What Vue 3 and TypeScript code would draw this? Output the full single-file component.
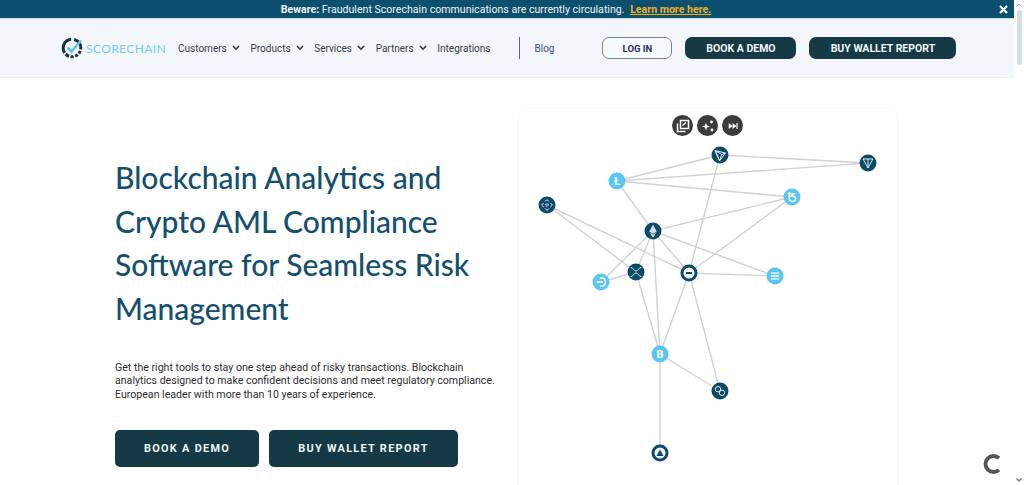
<script setup lang="ts">
interface GraphNode {
  id: string;
  x: number;
  y: number;
  light: boolean;
  icon?: string;
  fill?: string;
  label?: string;
}

const menu = ["Customers", "Products", "Services", "Partners"];

const nodes: GraphNode[] = [
  { id: "tron", x: 720, y: 155, light: false, icon: "M-5.5 -5L6 -2.2L-0.5 6.5ZM-5.5 -5L-0.5 6.5M-5.5 -5L2 -0.5L6 -2.2M2 -0.5L-0.5 6.5" },
  { id: "ton", x: 868, y: 163, light: false, icon: "M-5.5 -4.5H5.5L0 5.5ZM0 -4.5V5.5" },
  { id: "ltc", x: 617, y: 181, light: true, label: "Ł" },
  { id: "tezos", x: 792, y: 197, light: true, icon: "M-3 -5.5V1.5C-3 4 -1 5 1 5C3 5 4 3.5 4 2C4 0 2.5 -1 0 -1H-1L2.5 -3.8H-5" },
  { id: "bnb", x: 547, y: 205, light: false, icon: "M0 -6L2.2 -3.8M0 -6L-2.2 -3.8M6 0L3.8 -2.2M6 0L3.8 2.2M0 6L2.2 3.8M0 6L-2.2 3.8M-6 0L-3.8 -2.2M-6 0L-3.8 2.2M0 -1.7L1.7 0L0 1.7L-1.7 0Z" },
  { id: "eth", x: 653, y: 231, light: false, icon: "M0 -7L4.2 0.5L0 3L-4.2 0.5ZM0 4L3.8 1.8L0 7.5L-3.8 1.8Z", fill: "#d5dde2" },
  { id: "xrp", x: 636, y: 272, light: false, icon: "M-6 -5C-3 -5 -2 -1 0 -1C2 -1 3 -5 6 -5M-6 5C-3 5 -2 1 0 1C2 1 3 5 6 5" },
  { id: "dash", x: 689, y: 273, light: false },
  { id: "dgb", x: 601, y: 282, light: true, icon: "M-1.5 -4.5H1C3.5 -4.5 5 -2.5 5 0C5 2.5 3.5 4.5 1 4.5H-1.5M-5 0H2" },
  { id: "stripe", x: 775, y: 276, light: true, icon: "M-4.5 -3.2H4.5M-4.5 0H4.5M-4.5 3.2H4.5" },
  { id: "btc", x: 660, y: 354, light: true, label: "B" },
  { id: "poly", x: 720, y: 391, light: false, icon: "M-2.2 -5A3 3 0 1 0 -2.2 1A3 3 0 1 0 -2.2 -5ZM2.2 -1A3 3 0 1 0 2.2 5A3 3 0 1 0 2.2 -1Z" },
  { id: "avax", x: 660, y: 453, light: false },
];

const edges: [string, string][] = [
  ["tron", "ton"], ["tron", "ltc"], ["ltc", "ton"], ["ltc", "tezos"], ["ltc", "eth"],
  ["bnb", "xrp"], ["bnb", "dash"], ["eth", "tezos"], ["eth", "stripe"], ["eth", "dash"],
  ["eth", "xrp"], ["eth", "dgb"], ["eth", "btc"], ["tron", "dash"], ["tezos", "dash"],
  ["dash", "stripe"], ["dash", "btc"], ["dash", "poly"], ["xrp", "btc"], ["xrp", "dgb"],
  ["btc", "poly"], ["btc", "avax"],
];

function at(id: string): GraphNode {
  return nodes.find((n) => n.id === id)!;
}
</script>

<template>
  <div class="page">
    <div class="main">
      <div class="banner">
        <span class="banner-text"><b>Beware:</b> Fraudulent Scorechain communications are currently circulating.
          <a class="banner-link">Learn more here.</a></span>
        <svg class="banner-close" width="9" height="9" viewBox="0 0 9 9">
          <path d="M1 1L8 8M8 1L1 8" stroke="#fff" stroke-width="2.2" />
        </svg>
      </div>

      <header class="nav">
        <div class="logo">
          <svg width="22" height="22" viewBox="0 0 22 22">
            <circle cx="11" cy="11" r="8.8" fill="none" stroke="#16323f" stroke-width="3" stroke-dasharray="12 1.6 3 1.6 3 1.6 3 1.6 4 1.6 18 3" transform="rotate(-70 11 11)" />
            <path d="M6.5 10.5L10.5 14.5L20 3.5" fill="none" stroke="#5cc5f2" stroke-width="2.6" />
          </svg>
          <span class="logo-name">SCORECHAIN</span>
        </div>
        <nav class="links">
          <a v-for="item in menu" :key="item" class="link">
            {{ item }}
            <svg width="8" height="6" viewBox="0 0 8 6"><path d="M1 1L4 4.2L7 1" fill="none" stroke="#2b3a45" stroke-width="1.6" /></svg>
          </a>
          <a class="link">Integrations</a>
        </nav>
        <span class="divider"></span>
        <a class="link blog">Blog</a>
        <button class="btn-login">LOG IN</button>
        <button class="btn-dark demo">BOOK A DEMO</button>
        <button class="btn-dark report">BUY WALLET REPORT</button>
      </header>

      <section class="hero">
        <div class="copy">
          <h1>Blockchain Analytics and Crypto AML Compliance Software for Seamless Risk Management</h1>
          <p>Get the right tools to stay one step ahead of risky transactions. Blockchain analytics designed to make confident decisions and meet regulatory compliance. European leader with more than 10 years of experience.</p>
          <div class="cta">
            <button class="btn-cta">BOOK A DEMO</button>
            <button class="btn-cta">BUY WALLET REPORT</button>
          </div>
        </div>

        <div class="graph-card">
          <div class="tools">
            <span class="tool">
              <svg width="14" height="14" viewBox="0 0 14 14"><rect x="4.5" y="1.5" width="8" height="8" fill="none" stroke="#fff" stroke-width="1.5" /><path d="M1.5 4.5V12.5H9.5" fill="none" stroke="#fff" stroke-width="1.5" /><path d="M6.5 6.5L10 3.5" stroke="#fff" stroke-width="1.3" /></svg>
            </span>
            <span class="tool">
              <svg width="14" height="14" viewBox="0 0 14 14" fill="#fff"><path d="M5 3.5L6 6.5L9 7.5L6 8.5L5 11.5L4 8.5L1 7.5L4 6.5Z" /><circle cx="10.5" cy="3" r="1.4" /><circle cx="11" cy="11" r="1.4" /></svg>
            </span>
            <span class="tool">
              <svg width="12" height="12" viewBox="0 0 14 14" fill="#fff"><path d="M2 3.5L6.5 7L2 10.5ZM6.5 3.5L11 7L6.5 10.5Z" /><rect x="11" y="3.5" width="1.4" height="7" /></svg>
            </span>
          </div>
          <svg class="graph" viewBox="519 108 378 376">
            <line v-for="e in edges" :key="e.join('-')" :x1="at(e[0]).x" :y1="at(e[0]).y" :x2="at(e[1]).x" :y2="at(e[1]).y" stroke="#d2d2d2" stroke-width="1.4" />
            <g v-for="n in nodes" :key="n.id" :transform="`translate(${n.x} ${n.y})`">
              <circle r="8.5" :fill="n.light ? '#5cc5f2' : '#0d4a68'" />
              <path v-if="n.icon" :d="n.icon" transform="scale(0.9)" :fill="n.fill || 'none'" :stroke="n.light ? '#fff' : '#e6f0f5'" :stroke-width="n.fill ? 0 : n.light ? 1.5 : 1.1" />
              <text v-if="n.label" y="4" text-anchor="middle" class="coin">{{ n.label }}</text>
              <template v-if="n.id === 'dash'">
                <circle r="5.5" fill="#f1f5f8" />
                <path d="M-3 0H3" stroke="#0d4a68" stroke-width="2" />
              </template>
              <template v-if="n.id === 'avax'">
                <circle r="5.5" fill="#f1f5f8" />
                <path d="M0 -3.5L3.5 3H-3.5Z" fill="#0d4a68" />
              </template>
            </g>
          </svg>
        </div>
      </section>

      <svg class="spinner" width="20" height="20" viewBox="0 0 20 20">
        <path d="M16 4.2A8 8 0 1 0 16 15.8" fill="none" stroke="#555" stroke-width="3.8" />
      </svg>
    </div>

    <div class="scrollbar">
      <svg width="6" height="4" viewBox="0 0 6 4"><path d="M0.5 3.5L3 1L5.5 3.5" fill="none" stroke="#a9b4bd" stroke-width="1" /></svg>
      <span class="thumb"></span>
      <svg class="arrow-down" width="6" height="4" viewBox="0 0 6 4"><path d="M0.5 0.5L3 3L5.5 0.5" fill="none" stroke="#66717a" stroke-width="1.2" /></svg>
    </div>
  </div>
</template>

<style>
html,
body {
  margin: 0;
  overflow: hidden;
  background: #fff;
}
</style>

<style scoped>
.page {
  display: flex;
  height: 485px;
  overflow: hidden;
  font-family: Roboto, "Liberation Sans", sans-serif;
}
.main {
  position: relative;
  flex: 1;
  min-width: 0;
}
.banner {
  display: flex;
  align-items: center;
  justify-content: center;
  position: relative;
  height: 18px;
  background: #0c4f6e;
  color: #f1f5f8;
  font-size: 10.6px;
}
.banner-text {
  margin-right: 22px;
}
.banner-link {
  margin-left: 3px;
  color: #f2b01e;
  font-weight: 700;
  text-decoration: underline;
}
.banner-close {
  position: absolute;
  right: 6px;
  top: 5px;
}
.nav {
  display: flex;
  align-items: center;
  height: 58px;
  padding-left: 61px;
  background: #f3f7fb;
  border-top: 1px solid #cfd9e0;
  border-bottom: 1px solid #eef0f2;
}
.logo {
  display: flex;
  align-items: center;
  gap: 3px;
}
.logo-name {
  color: #6fcdf5;
  font-family: Lato, sans-serif;
  font-size: 12px;
  letter-spacing: 0.4px;
}
.links {
  display: flex;
  align-items: center;
  gap: 10.7px;
  margin-left: 12px;
}
.link {
  display: flex;
  align-items: center;
  gap: 5px;
  color: #33414c;
  font-size: 10px;
}
.divider {
  width: 1px;
  height: 22px;
  margin-left: 29px;
  background: #5b6a74;
}
.blog {
  margin-left: 14px;
  color: #3c4f70;
}
.btn-login {
  width: 70px;
  height: 22px;
  margin-left: 48px;
  padding: 0;
  border: 1px solid #6f8793;
  border-radius: 7px;
  background: #f8fbfd;
  color: #1c2f66;
  font: 700 9.5px Roboto, sans-serif;
}
.btn-dark {
  height: 22px;
  padding: 0;
  border: 0;
  border-radius: 7px;
  background: #153a45;
  color: #f2f5f6;
  font: 700 10.5px Roboto, sans-serif;
}
.demo {
  width: 111px;
  margin-left: 13px;
}
.report {
  width: 147px;
  margin-left: 13px;
}
.hero {
  display: flex;
  align-items: flex-start;
  padding: 29px 0 0 115px;
}
.copy {
  width: 403px;
  padding-top: 49px;
}
h1 {
  width: 380px;
  margin: 0;
  color: #14506e;
  font-family: Lato, sans-serif;
  font-size: 30px;
  font-weight: 500;
  line-height: 43.7px;
}
p {
  width: 385px;
  margin: 30px 0 0;
  color: #2d2d2d;
  font-size: 10.6px;
  line-height: 13.5px;
}
.cta {
  display: flex;
  gap: 10px;
  margin-top: 29px;
}
.btn-cta {
  height: 37px;
  padding: 0 29px;
  border: 0;
  border-radius: 5px;
  background: #153a45;
  color: #f2f5f6;
  font: 700 10.9px Roboto, sans-serif;
  letter-spacing: 1.3px;
}
.graph-card {
  position: relative;
  width: 380px;
  height: 420px;
  box-sizing: border-box;
  border: 1px solid #f6f7fb;
  border-radius: 12px;
}
.tools {
  position: absolute;
  top: 7px;
  left: 153px;
  display: flex;
  gap: 4px;
}
.tool {
  display: flex;
  align-items: center;
  justify-content: center;
  width: 21px;
  height: 21px;
  border-radius: 50%;
  background: #3c3c3c;
}
.graph {
  display: block;
  width: 378px;
  height: 376px;
}
.coin {
  fill: #fff;
  font: 700 11px Roboto, sans-serif;
}
.spinner {
  position: absolute;
  right: 11px;
  bottom: 11px;
}
.scrollbar {
  display: flex;
  flex-direction: column;
  align-items: center;
  flex: none;
  width: 10px;
  padding-top: 3px;
  box-sizing: border-box;
  background: #fff;
}
.thumb {
  width: 5px;
  height: 55px;
  margin-top: 3px;
  border-radius: 3px;
  background: #d3dde6;
}
.arrow-down {
  margin-top: auto;
  margin-bottom: 3px;
}
</style>
